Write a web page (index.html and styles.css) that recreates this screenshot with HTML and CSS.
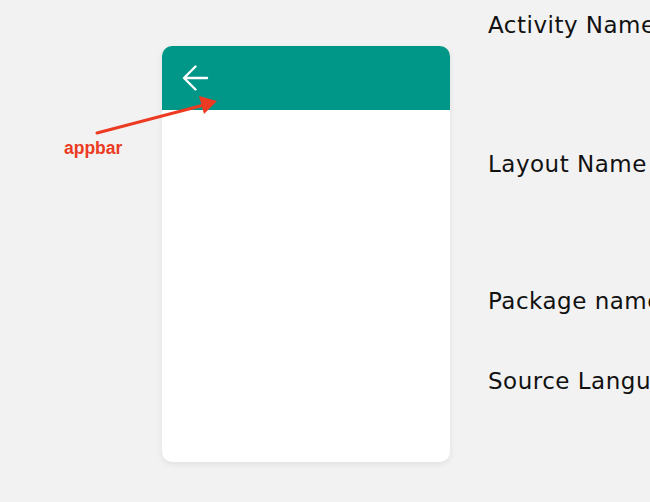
FILE: index.html
```html
<!DOCTYPE html>
<html>
<head>
<meta charset="UTF-8">
<title>Appbar</title>
<link rel="stylesheet" href="styles.css">
</head>
<body>
	<div class="page">
		<!-- phone preview -->
		<div class="preview">
			<div class="card">
				<div class="appbar">
					<svg class="back" width="28" height="26" viewBox="0 0 28 26">
						<path d="M25 13H3M13.5 1.5L2 13l11.5 11.5" fill="none" stroke="#fff" stroke-width="2.4" stroke-linecap="round" stroke-linejoin="round"/>
					</svg>
				</div>
				<div class="content"></div>
			</div>
		</div>

		<!-- form labels -->
		<div class="fields">
			<div class="field">Activity Name</div>
			<div class="field second">Layout Name</div>
			<div class="field third">Package name</div>
			<div class="field fourth">Source Language</div>
		</div>

		<!-- annotation -->
		<div class="note">appbar</div>
		<svg class="pointer" width="650" height="502" viewBox="0 0 650 502">
			<line x1="97" y1="133" x2="204" y2="105" stroke="#ec3b22" stroke-width="3" stroke-linecap="round"/>
			<polygon points="217,101 199,96 204,114" fill="#ec3b22"/>
		</svg>
	</div>
</body>
</html>
```
FILE: styles.css
```css
html,
body {
  margin: 0;
  height: 100%;
  overflow: hidden;
  background-color: #f2f2f2;
}

.page {
  display: flex;
  height: 502px;
}

.preview {
  padding: 46px 0 0 162px;
}

.card {
  width: 288px;
  height: 416px;
  background-color: #fff;
  border-radius: 10px;
  overflow: hidden;
  box-shadow: 0 2px 6px rgba(0, 0, 0, 0.08);
}

.appbar {
  height: 64px;
  background-color: #009688;
  display: flex;
  align-items: center;
  padding-left: 20px;
}

.back {
  display: block;
}

.fields {
  padding: 11px 0 0 38px;
  font-family: "DejaVu Sans", sans-serif;
  font-size: 23px;
  letter-spacing: 0.5px;
  line-height: 28px;
  color: #111;
  white-space: nowrap;
}

.field.second {
  margin-top: 111px;
}

.field.third {
  margin-top: 109px;
}

.field.fourth {
  margin-top: 52px;
}

.note {
  position: absolute;
  left: 64px;
  top: 138px;
  font-family: "Liberation Sans", Arial, sans-serif;
  font-weight: bold;
  font-size: 17.5px;
  color: #ec3b22;
}

.pointer {
  position: absolute;
  left: 0;
  top: 0;
}
```
